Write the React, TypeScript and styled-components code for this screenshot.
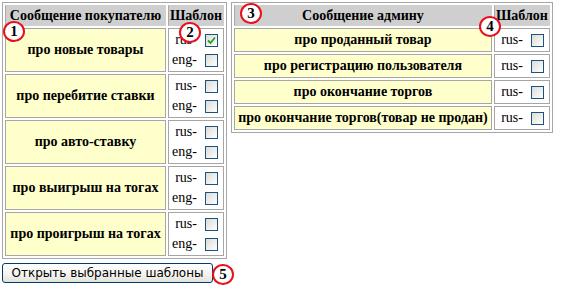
import React, { useState } from "react"
import styled, { createGlobalStyle } from "styled-components"

const serif = "\"Liberation Serif\", \"Times New Roman\", \"DejaVu Serif\", serif"

const GlobalStyle = createGlobalStyle`
    body {
        margin: 0;
        background: #ffffff;
        font-family: ${serif};
        color: #000000;
    }
`

const Page = styled.div({
    position: "relative",
    padding: "2px 0 0 2px",
    width: "561px",
    height: "288px",
    boxSizing: "border-box",
    fontFamily: serif
})

const TablesRow = styled.div({
    display: "flex",
    alignItems: "flex-start",
    gap: "4px"
})

const Table = styled.table({
    borderCollapse: "separate",
    borderSpacing: "2px",
    border: "1px solid #a6a6a6",
    tableLayout: "fixed",
    fontFamily: serif,
    fontSize: "14px",
    color: "#000000"
})

const HeadCell = styled.th<{ w: number }>(({ w }) => ({
    boxSizing: "border-box",
    width: `${w}px`,
    height: "21px",
    padding: "0 1px",
    background: "#cfcfcf",
    border: "1px solid #cfcfcf",
    borderLeftColor: "#a8a8a8",
    fontFamily: serif,
    fontSize: "14px",
    fontWeight: "bold",
    whiteSpace: "nowrap",
    overflow: "hidden",
    lineHeight: "17px",
    textAlign: "center"
}))

const NameCell = styled.td<{ h: number }>(({ h }) => ({
    boxSizing: "border-box",
    height: `${h}px`,
    padding: "1px",
    background: "#ffffcc",
    border: "1px solid #a6a6a6",
    fontFamily: serif,
    fontSize: "14px",
    fontWeight: "bold",
    textAlign: "center",
    verticalAlign: "middle",
    whiteSpace: "nowrap",
    overflow: "hidden"
}))

const TemplateCell = styled.td({
    boxSizing: "border-box",
    padding: "1px",
    background: "#ffffff",
    border: "1px solid #a6a6a6",
    verticalAlign: "middle"
})

const LangLine = styled.div({
    display: "flex",
    alignItems: "center",
    justifyContent: "flex-end",
    height: "20px",
    whiteSpace: "nowrap"
})

const LangLabel = styled.span({
    fontFamily: serif,
    fontSize: "14px",
    marginRight: "8px"
})

const Box = styled.span<{ checked?: boolean }>({
    display: "inline-flex",
    alignItems: "center",
    justifyContent: "center",
    boxSizing: "border-box",
    width: "13px",
    height: "13px",
    marginRight: "4px",
    border: "1px solid #1c5180",
    background: "linear-gradient(135deg, #dcdcd7 0%, #f4f4f0 70%, #ffffff 100%)",
    cursor: "pointer"
})

const OpenButton = styled.button({
    display: "block",
    marginTop: "4px",
    width: "211px",
    height: "20px",
    padding: "0",
    border: "1px solid #003c74",
    borderRadius: "3px",
    background: "linear-gradient(#ffffff 0%, #f3f3ef 60%, #e3e2da 100%)",
    fontFamily: "\"DejaVu Sans\", Verdana, sans-serif",
    fontSize: "12px",
    color: "#000000",
    textAlign: "center",
    cursor: "pointer"
})

const Marker = styled.div<{ x: number; y: number }>(({ x, y }) => ({
    position: "absolute",
    left: `${x}px`,
    top: `${y}px`,
    boxSizing: "border-box",
    width: "22px",
    height: "21px",
    borderRadius: "50%",
    border: "2px solid #e8101a",
    background: "#ffffff",
    display: "flex",
    alignItems: "center",
    justifyContent: "center",
    fontFamily: serif,
    fontWeight: "bold",
    fontSize: "15px",
    lineHeight: "1"
}))

const CheckMark = () => (
    <svg width="9" height="9" viewBox="0 0 9 9">
        <path d="M1 4.5 L3.5 7 L8 1.5" fill="none" stroke="#21a121" strokeWidth="1.8" />
    </svg>
)

interface CheckProps {
    checked: boolean
    onToggle: () => void
}

const Check: React.FC<CheckProps> = ({ checked, onToggle }) => (
    <Box checked={checked} onClick={onToggle}>
        {checked && <CheckMark />}
    </Box>
)

const buyerMessages = [
    "про новые товары",
    "про перебитие ставки",
    "про авто-ставку",
    "про выигрыш на тогах",
    "про проигрыш на тогах"
]

const adminMessages = [
    "про проданный товар",
    "про регистрацию пользователя",
    "про окончание торгов",
    "про окончание торгов(товар не продан)"
]

const App: React.FC = () => {
    const [checked, setChecked] = useState<{ [key: string]: boolean }>({ "buyer-0-rus": true })

    const toggle = (key: string) => setChecked({ ...checked, [key]: !checked[key] })

    return (
        <Page>
            <GlobalStyle />
            <TablesRow>
                <Table>
                    <thead>
                        <tr>
                            <HeadCell w={161}>Сообщение покупателю</HeadCell>
                            <HeadCell w={54}>Шаблон</HeadCell>
                        </tr>
                    </thead>
                    <tbody>
                        {
                            buyerMessages.map((text, index) =>
                                <tr key={index}>
                                    <NameCell h={44}>{text}</NameCell>
                                    <TemplateCell>
                                        {
                                            ["rus", "eng"].map(lang =>
                                                <LangLine key={lang}>
                                                    <LangLabel>{lang}-</LangLabel>
                                                    <Check checked={!!checked[`buyer-${index}-${lang}`]} onToggle={() => toggle(`buyer-${index}-${lang}`)} />
                                                </LangLine>
                                            )
                                        }
                                    </TemplateCell>
                                </tr>
                            )
                        }
                    </tbody>
                </Table>
                <Table>
                    <thead>
                        <tr>
                            <HeadCell w={258}>Сообщение админу</HeadCell>
                            <HeadCell w={55}>Шаблон</HeadCell>
                        </tr>
                    </thead>
                    <tbody>
                        {
                            adminMessages.map((text, index) =>
                                <tr key={index}>
                                    <NameCell h={24}>{text}</NameCell>
                                    <TemplateCell>
                                        <LangLine>
                                            <LangLabel>rus-</LangLabel>
                                            <Check checked={!!checked[`admin-${index}-rus`]} onToggle={() => toggle(`admin-${index}-rus`)} />
                                        </LangLine>
                                    </TemplateCell>
                                </tr>
                            )
                        }
                    </tbody>
                </Table>
            </TablesRow>
            <OpenButton>Открыть выбранные шаблоны</OpenButton>

            <Marker x={3} y={21}>1</Marker>
            <Marker x={179} y={22}>2</Marker>
            <Marker x={240} y={3}>3</Marker>
            <Marker x={479} y={16}>4</Marker>
            <Marker x={212} y={264}>5</Marker>
        </Page>
    )
}

export default App
